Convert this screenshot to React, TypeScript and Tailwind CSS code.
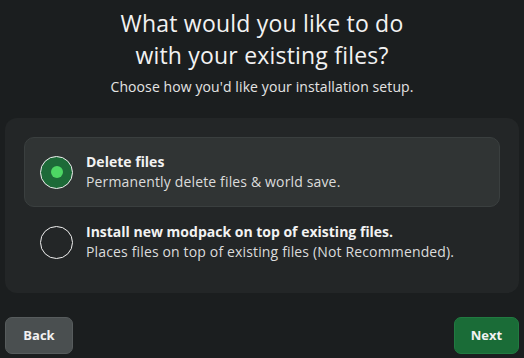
import React, { useState } from "react";

const options = [
  {
    id: "delete",
    title: "Delete files",
    desc: "Permanently delete files & world save.",
  },
  {
    id: "install",
    title: "Install new modpack on top of existing files.",
    desc: "Places files on top of existing files (Not Recommended).",
  },
];

export default function App() {
  const [selected, setSelected] = useState("delete");

  return (
    <div
      className="h-[358px] w-[524px] bg-[#1b1e1f] text-[#f2f2f2] flex flex-col overflow-hidden"
      style={{ fontFamily: '"Open Sans", "Liberation Sans", sans-serif' }}
    >
      <div className="pt-[7px] text-center">
        <h1 className="text-[23px] leading-[32px] font-medium tracking-[0.2px]">
          What would you like to do
          <br />
          with your existing files?
        </h1>
        <p className="mt-[6px] text-[14px] leading-[20px] text-[#e4e4e4] tracking-[0.1px]">
          Choose how you'd like your installation setup.
        </p>
      </div>

      <div className="mx-[5px] mt-[21px] h-[175px] rounded-xl bg-[#232627] px-[19px] pt-[19px] flex flex-col">
        {options.map((o) => {
          const active = selected === o.id;
          return (
            <button
              key={o.id}
              onClick={() => setSelected(o.id)}
              className={`h-[70px] w-full flex items-center gap-[13px] pl-[15px] rounded-[10px] border text-left ${
                active ? "bg-[#303434] border-[#3a3f3f]" : "bg-transparent border-transparent"
              }`}
            >
              <span
                className={`w-[33px] h-[33px] shrink-0 rounded-full border border-[#f0f0f0] flex items-center justify-center ${
                  active ? "bg-[#1d6a38]" : ""
                }`}
              >
                {active && <span className="w-[12px] h-[12px] rounded-full bg-[#4dd664]" />}
              </span>
              <span className="flex flex-col">
                <span className="text-[14px] leading-[20px] font-bold text-[#f2f2f2]">{o.title}</span>
                <span className="text-[14px] leading-[20px] text-[#dcdcdc] tracking-[0.15px]">{o.desc}</span>
              </span>
            </button>
          );
        })}
      </div>

      <div className="mt-[24px] px-[5px] flex justify-between">
        <button className="h-[37px] w-[68px] rounded-[7px] bg-[#4a4f50] border border-[#575c5d] text-[13px] font-bold text-[#f2f2f2]">
          Back
        </button>
        <button className="h-[37px] w-[65px] rounded-[7px] bg-[#1a6c37] border border-[#217a41] text-[13px] font-bold text-[#f2f2f2]">
          Next
        </button>
      </div>
    </div>
  );
}
